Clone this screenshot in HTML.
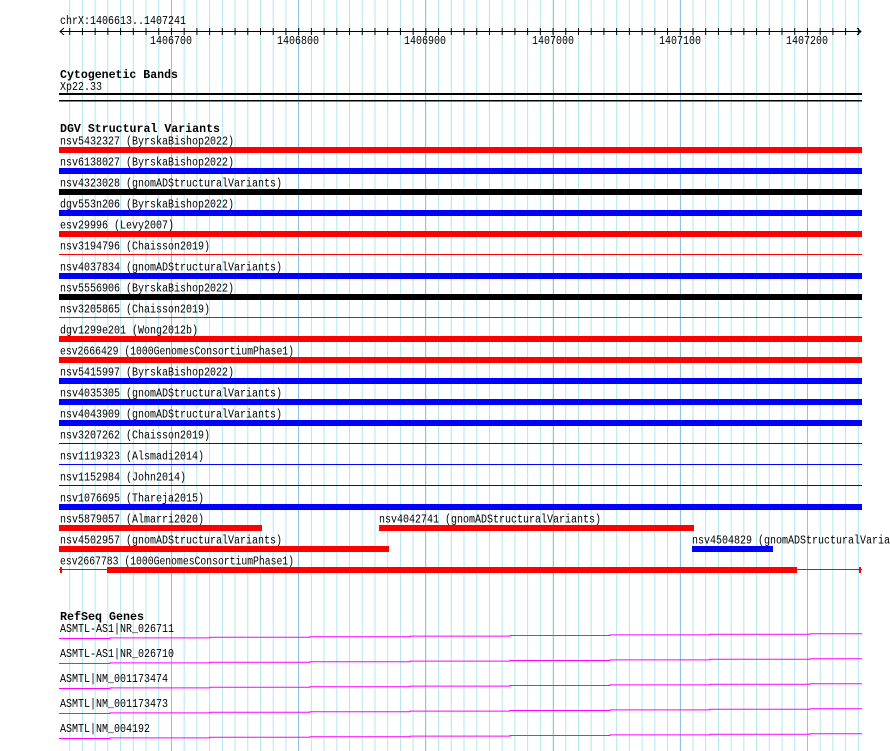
<!DOCTYPE html>
<html><head><meta charset="utf-8"><style>
html,body{margin:0;padding:0;background:#fff;}
svg{display:block;}
text{font-family:"Liberation Mono","DejaVu Sans Mono",monospace;font-size:11.5px;fill:#000;}
.b{font-weight:bold;font-size:12px;}
</style></head><body>
<svg width="890" height="751" viewBox="0 0 890 751" xmlns="http://www.w3.org/2000/svg">
<defs>
<pattern id="g" x="69.2" y="0" width="12.72" height="751" patternUnits="userSpaceOnUse">
<rect x="0" y="0" width="1" height="751" fill="#b2e6ee"/>
</pattern>
<pattern id="tk" x="69.2" y="0" width="12.72" height="751" patternUnits="userSpaceOnUse"><rect x="0" y="0" width="1" height="751" fill="#000"/></pattern>
</defs>
<rect x="69" y="0" width="791" height="751" fill="url(#g)"/>
<g fill="#8ec4e4">
<rect x="171" y="0" width="1" height="751"/>
<rect x="298" y="0" width="1" height="751"/>
<rect x="425" y="0" width="1" height="751"/>
<rect x="553" y="0" width="1" height="751"/>
<rect x="680" y="0" width="1" height="751"/>
<rect x="807" y="0" width="1" height="751"/>
</g>
<!-- ruler -->
<text x="60" y="24" textLength="126" lengthAdjust="spacingAndGlyphs">chrX:1406613..1407241</text>
<rect x="60" y="31" width="801" height="1" fill="#000"/>
<path d="M64 28 L60 31.5 L64 35 M857 28 L861 31.5 L857 35" stroke="#000" fill="none"/>
<rect x="69" y="28" width="791" height="7" fill="url(#tk)"/>
<text x="150" y="44" textLength="42" lengthAdjust="spacingAndGlyphs">1406700</text>
<text x="277" y="44" textLength="42" lengthAdjust="spacingAndGlyphs">1406800</text>
<text x="404" y="44" textLength="42" lengthAdjust="spacingAndGlyphs">1406900</text>
<text x="532" y="44" textLength="42" lengthAdjust="spacingAndGlyphs">1407000</text>
<text x="659" y="44" textLength="42" lengthAdjust="spacingAndGlyphs">1407100</text>
<text x="786" y="44" textLength="42" lengthAdjust="spacingAndGlyphs">1407200</text>
<!-- cytobands -->
<text class="b" x="60" y="78" textLength="118" lengthAdjust="spacingAndGlyphs">Cytogenetic Bands</text>
<text x="60" y="90" textLength="42" lengthAdjust="spacingAndGlyphs">Xp22.33</text>
<rect x="59" y="93" width="803" height="2" fill="#000"/>
<rect x="59" y="100" width="803" height="1.5" fill="#000"/>
<!-- DGV -->
<text class="b" x="60" y="132" textLength="160" lengthAdjust="spacingAndGlyphs">DGV Structural Variants</text>
<text x="60" y="144.5" textLength="174" lengthAdjust="spacingAndGlyphs">nsv5432327 (ByrskaBishop2022)</text>
<rect x="59" y="147" width="803" height="6" fill="#f00"/>
<text x="60" y="165.5" textLength="174" lengthAdjust="spacingAndGlyphs">nsv6138027 (ByrskaBishop2022)</text>
<rect x="59" y="168" width="803" height="6" fill="#00f"/>
<text x="60" y="186.5" textLength="222" lengthAdjust="spacingAndGlyphs">nsv4323028 (gnomADStructuralVariants)</text>
<rect x="59" y="189" width="803" height="6" fill="#000"/>
<text x="60" y="207.5" textLength="174" lengthAdjust="spacingAndGlyphs">dgv553n206 (ByrskaBishop2022)</text>
<rect x="59" y="210" width="803" height="6" fill="#00f"/>
<text x="60" y="228.5" textLength="114" lengthAdjust="spacingAndGlyphs">esv29996 (Levy2007)</text>
<rect x="59" y="231" width="803" height="6" fill="#f00"/>
<text x="60" y="249.5" textLength="150" lengthAdjust="spacingAndGlyphs">nsv3194796 (Chaisson2019)</text>
<rect x="59" y="254" width="803" height="1" fill="#f00"/>
<text x="60" y="270.5" textLength="222" lengthAdjust="spacingAndGlyphs">nsv4037834 (gnomADStructuralVariants)</text>
<rect x="59" y="273" width="803" height="6" fill="#00f"/>
<text x="60" y="291.5" textLength="174" lengthAdjust="spacingAndGlyphs">nsv5556906 (ByrskaBishop2022)</text>
<rect x="59" y="294" width="803" height="6" fill="#000"/>
<text x="60" y="312.5" textLength="150" lengthAdjust="spacingAndGlyphs">nsv3205865 (Chaisson2019)</text>
<rect x="59" y="317" width="803" height="1" fill="#f00"/>
<text x="60" y="333.5" textLength="138" lengthAdjust="spacingAndGlyphs">dgv1299e201 (Wong2012b)</text>
<rect x="59" y="336" width="803" height="6" fill="#f00"/>
<text x="60" y="354.5" textLength="234" lengthAdjust="spacingAndGlyphs">esv2666429 (1000GenomesConsortiumPhase1)</text>
<rect x="59" y="357" width="803" height="6" fill="#f00"/>
<text x="60" y="375.5" textLength="174" lengthAdjust="spacingAndGlyphs">nsv5415997 (ByrskaBishop2022)</text>
<rect x="59" y="378" width="803" height="6" fill="#00f"/>
<text x="60" y="396.5" textLength="222" lengthAdjust="spacingAndGlyphs">nsv4035305 (gnomADStructuralVariants)</text>
<rect x="59" y="399" width="803" height="6" fill="#00f"/>
<text x="60" y="417.5" textLength="222" lengthAdjust="spacingAndGlyphs">nsv4043909 (gnomADStructuralVariants)</text>
<rect x="59" y="420" width="803" height="6" fill="#00f"/>
<text x="60" y="438.5" textLength="150" lengthAdjust="spacingAndGlyphs">nsv3207262 (Chaisson2019)</text>
<rect x="59" y="443" width="803" height="1" fill="#00f"/>
<text x="60" y="459.5" textLength="144" lengthAdjust="spacingAndGlyphs">nsv1119323 (Alsmadi2014)</text>
<rect x="59" y="464" width="803" height="1" fill="#00f"/>
<text x="60" y="480.5" textLength="126" lengthAdjust="spacingAndGlyphs">nsv1152984 (John2014)</text>
<rect x="59" y="485" width="803" height="1" fill="#00f"/>
<text x="60" y="501.5" textLength="144" lengthAdjust="spacingAndGlyphs">nsv1076695 (Thareja2015)</text>
<rect x="59" y="504" width="803" height="6" fill="#00f"/>
<text x="60" y="522.5" textLength="144" lengthAdjust="spacingAndGlyphs">nsv5879057 (Almarri2020)</text>
<rect x="59" y="525" width="203" height="6" fill="#f00"/>
<text x="379" y="522.5" textLength="222" lengthAdjust="spacingAndGlyphs">nsv4042741 (gnomADStructuralVariants)</text>
<rect x="379" y="525" width="315" height="6" fill="#f00"/>
<text x="60" y="543.5" textLength="222" lengthAdjust="spacingAndGlyphs">nsv4502957 (gnomADStructuralVariants)</text>
<rect x="59" y="546" width="330" height="6" fill="#f00"/>
<text x="692" y="543.5" textLength="222" lengthAdjust="spacingAndGlyphs">nsv4504829 (gnomADStructuralVariants)</text>
<rect x="692" y="546" width="81" height="6" fill="#00f"/>
<text x="60" y="564.5" textLength="234" lengthAdjust="spacingAndGlyphs">esv2667783 (1000GenomesConsortiumPhase1)</text>
<rect x="59" y="569" width="803" height="1" fill="#f00"/>
<rect x="60" y="567" width="2" height="6" fill="#f00"/>
<rect x="859" y="567" width="2" height="6" fill="#f00"/>
<rect x="107" y="567" width="690" height="6" fill="#f00"/>
<!-- RefSeq -->
<text class="b" x="60" y="620" textLength="84" lengthAdjust="spacingAndGlyphs">RefSeq Genes</text>
<g fill="none" stroke="#f0f" stroke-width="1">
<path id="gl" d="M59 638.5H110V637.9H210V637.3H310V636.7H410V636.1H510V635.5H610V634.9H710V634.3H810V633.7H862"/>
<use href="#gl" y="25"/>
<use href="#gl" y="50"/>
<use href="#gl" y="75"/>
<use href="#gl" y="100"/>
</g>
<text x="60" y="632" textLength="114" lengthAdjust="spacingAndGlyphs">ASMTL-AS1|NR_026711</text>
<text x="60" y="657" textLength="114" lengthAdjust="spacingAndGlyphs">ASMTL-AS1|NR_026710</text>
<text x="60" y="682" textLength="108" lengthAdjust="spacingAndGlyphs">ASMTL|NM_001173474</text>
<text x="60" y="707" textLength="108" lengthAdjust="spacingAndGlyphs">ASMTL|NM_001173473</text>
<text x="60" y="732" textLength="90" lengthAdjust="spacingAndGlyphs">ASMTL|NM_004192</text>
</svg>
</body></html>
